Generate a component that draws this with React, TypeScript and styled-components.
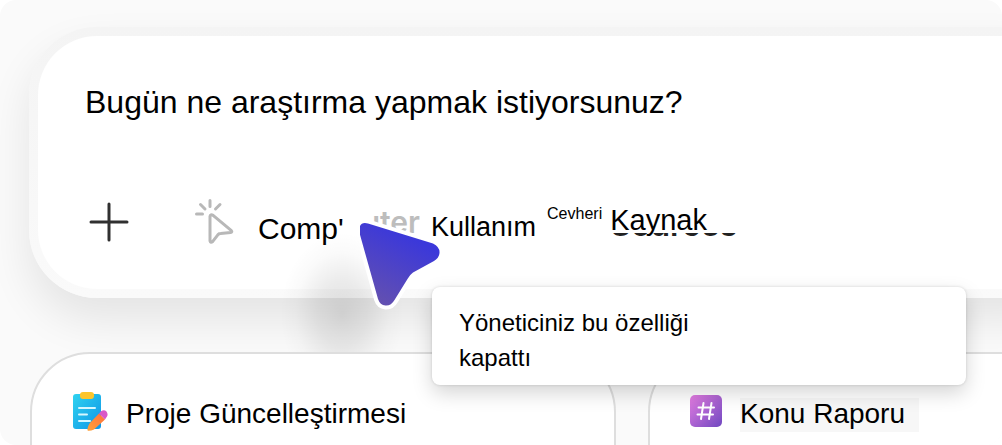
import React from 'react';
import styled, { createGlobalStyle } from 'styled-components';

const GlobalStyle = createGlobalStyle`
  * { box-sizing: border-box; }
  html, body { margin: 0; background: #fff; }
  body, button, textarea, input { font-family: 'Liberation Sans', Arial, sans-serif; color: #000; }
`;

const Page = styled.main`
  position: relative;
  height: 100vh;
  overflow: hidden;
  padding: 27px 0 0 29px;
  border-radius: 16px;
  background: #fafafa;
`;

const PromptCard = styled.section`
  display: flex;
  flex-direction: column;
  gap: 77px;
  margin-right: -80px;
  padding: 46px 48px 44px 47px;
  border: 9px solid transparent;
  border-radius: 68px;
  background:
    linear-gradient(#fff, #fff) padding-box,
    linear-gradient(#f4f4f4, #fafafa) border-box;
  box-shadow: 0 22px 44px rgba(0, 0, 0, 0.09);
`;

const PromptInput = styled.input`
  width: 100%;
  height: 40px;
  padding: 0;
  border: 0;
  outline: 0;
  background: transparent;
  font-size: 32px;
  &::placeholder { color: #000; opacity: 1; }
`;

const Toolbar = styled.div`
  display: flex;
  align-items: center;
  height: 46px;
`;

const ToolButton = styled.button`
  display: flex;
  align-items: center;
  padding: 0;
  border: 0;
  background: none;
  white-space: nowrap;
`;

const AddButton = styled(ToolButton)`
  margin: 0 61px 0 4px;
`;

const ComputerButton = styled(ToolButton)`
  gap: 20px;
  width: 241px;
`;

const Label = styled.span<{ $size: number; $drop?: number; $lift?: number }>`
  font-size: ${p => p.$size}px;
  line-height: 32px;
  padding-top: ${p => p.$drop ?? 0}px;
  padding-bottom: ${p => p.$lift ?? 0}px;
`;

const SourceGroup = styled(ToolButton)`
  gap: 8px;
  margin-left: 11px;
`;

const SourceLabel = styled(Label)`
  position: relative;
`;

const SourceRemnant = styled.span`
  position: absolute;
  left: 0;
  top: 29px;
  height: 5px;
  overflow: hidden;
  display: flex;
  align-items: flex-end;
  font: 600 32px/26px Inter, sans-serif;
  color: #222;
`;

const LabelRemnant = styled.span`
  position: absolute;
  left: 370px;
  top: 211px;
  width: 50px;
  height: 24px;
  overflow: hidden;
  display: flex;
  justify-content: flex-end;
  font: 600 30px/22px Inter, sans-serif;
  color: #bdbdbd;
`;

const CursorShade = styled.div`
  position: absolute;
  left: 280px;
  top: 232px;
  width: 124px;
  height: 164px;
  background: radial-gradient(closest-side, rgba(0, 0, 0, 0.12), rgba(0, 0, 0, 0.08) 40%, rgba(0, 0, 0, 0.02) 75%, rgba(0, 0, 0, 0));
`;

const Cursor = styled.svg`
  position: absolute;
  left: 360px;
  top: 216px;
`;

const Suggestions = styled.div`
  position: relative;
  display: grid;
  grid-template-columns: 1fr 1fr;
  gap: 32px;
  margin: 54px -232px 0 1px;
`;

const SuggestionCard = styled.button`
  display: flex;
  align-items: flex-start;
  gap: 18px;
  height: 160px;
  padding: 36px 40px;
  border: 2px solid #dedede;
  border-radius: 60px;
  background: #fff;
  text-align: left;
`;

const CardIcon = styled.span`
  display: flex;
  align-items: center;
  height: 42px;
`;

const CardLabel = styled.span<{ $shaded?: boolean }>`
  margin-top: 8px;
  padding: 0 14px 2px 0;
  font-size: 28px;
  line-height: 32px;
  background: ${p => (p.$shaded ? '#f7f7f7' : 'transparent')};
`;

const Tooltip = styled.div`
  position: absolute;
  left: 432px;
  right: 36px;
  top: 287px;
  padding: 18px 28px 10px 27px;
  border-radius: 8px;
  background: #fff;
  box-shadow: 0 8px 20px rgba(0, 0, 0, 0.17), 0 0 3px rgba(0, 0, 0, 0.15);
  font-size: 24px;
  line-height: 35px;
`;

const TooltipText = styled.p`
  max-width: 260px;
  margin: 0;
`;

const PlusIcon = () => (
  <svg width="40" height="40" viewBox="0 0 40 40" fill="none" stroke="#303030" strokeWidth="3" strokeLinecap="round" aria-hidden="true">
    <path d="M20 2v36M2 20h36" />
  </svg>
);

const ClickIcon = () => (
  <svg width="48" height="50" viewBox="190 198 48 50" fill="none" stroke="#b8b8b8" strokeWidth="3" strokeLinecap="round" strokeLinejoin="round" aria-hidden="true">
    <path d="M210 201.500v6M200.500 205.500l4.500 4.500M220 205.500l-4.500 4.500M196.500 215h6" />
    <path d="M210 217.500v24.500q.6 2.400 2.600.6l5.400-7q1-1 2.600-1l10-1q2.200-.6.500-2.200l-18-15q-2.800-1.700-3.100 1.100Z" />
  </svg>
);

const ClipboardIcon = () => (
  <svg width="36" height="40" viewBox="0 0 36 40" aria-hidden="true">
    <defs>
      <linearGradient id="board" x1="0" y1="0" x2="1" y2="1">
        <stop offset="0" stopColor="#2fd3f0" />
        <stop offset="1" stopColor="#0f95e6" />
      </linearGradient>
      <linearGradient id="pencil" x1="1" y1="0" x2="0" y2="1">
        <stop offset="0" stopColor="#ff6f3d" />
        <stop offset="1" stopColor="#ffa338" />
      </linearGradient>
    </defs>
    <rect x="1" y="3" width="28" height="35" rx="3" fill="url(#board)" />
    <rect x="8" y="1" width="14" height="7" rx="3" fill="#fcc52c" />
    <path d="M7 17h16M7 23.500h8M7 30h11" stroke="#d6f7ff" strokeWidth="2" strokeLinecap="round" />
    <path d="M27 22.500l6 6L22 38.500q-3 1.500-6 1.300-1-.5-.3-3 .5-2.600 2-4.600Z" fill="url(#pencil)" />
    <path d="M27 22.500l2-2.200q3-2.300 5.300 0 2.300 3 .5 5.500l-1.800 2.700Z" fill="#d957c8" />
  </svg>
);

const HashIcon = () => (
  <svg width="32" height="32" viewBox="0 0 32 32" aria-hidden="true">
    <defs>
      <linearGradient id="tile" x1="0" y1="0" x2="1" y2="1">
        <stop offset="0" stopColor="#e57de2" />
        <stop offset="1" stopColor="#7048c0" />
      </linearGradient>
    </defs>
    <rect width="32" height="32" rx="5" fill="url(#tile)" />
    <path d="M13.500 8l-2.500 16M21.500 8L19 24M8.500 12.500h15.500M7.500 19.500H23" stroke="#fff" strokeWidth="2" strokeLinecap="round" />
  </svg>
);

export default function App() {
  return (
    <>
      <GlobalStyle />
      <Page>
        <PromptCard>
          <PromptInput aria-label="Araştırma" placeholder="Bugün ne araştırma yapmak istiyorsunuz?" />
          <Toolbar>
            <AddButton aria-label="Ekle"><PlusIcon /></AddButton>
            <ComputerButton>
              <ClickIcon />
              <Label $size={30} $drop={14}>Comp'</Label>
            </ComputerButton>
            <ToolButton><Label $size={27} $drop={10}>Kullanım</Label></ToolButton>
            <SourceGroup>
              <Label $size={16} $lift={16}>Cevheri</Label>
              <SourceLabel $size={29} $lift={4}>
                <SourceRemnant aria-hidden="true">Sources</SourceRemnant>
                Kaynak
              </SourceLabel>
            </SourceGroup>
          </Toolbar>
        </PromptCard>
        <LabelRemnant aria-hidden="true">uter</LabelRemnant>
        <CursorShade />
        <Suggestions>
          <SuggestionCard>
            <CardIcon><ClipboardIcon /></CardIcon>
            <CardLabel>Proje Güncelleştirmesi</CardLabel>
          </SuggestionCard>
          <SuggestionCard>
            <CardIcon><HashIcon /></CardIcon>
            <CardLabel $shaded>Konu Raporu</CardLabel>
          </SuggestionCard>
        </Suggestions>
        <Tooltip role="tooltip">
          <TooltipText>Yöneticiniz bu özelliği kapattı</TooltipText>
        </Tooltip>
        <Cursor width="84" height="98" viewBox="360 216 84 98" aria-hidden="true">
          <defs>
            <linearGradient id="cursor" x1="0.7" y1="0.2" x2="0.3" y2="1">
              <stop offset="0" stopColor="#3b38da" />
              <stop offset="1" stopColor="#6350b0" />
            </linearGradient>
          </defs>
          <path
            d="M368 223.500L433 243.500Q440 247 439.500 253Q439 258 434 261L413 272.500Q409.500 275 407.500 279L394.500 300Q391 306 385.500 305.500Q380 305 378 299L359.500 233Q358 221 368 223.500Z"
            fill="url(#cursor)"
            stroke="#fff"
            strokeWidth="8"
            strokeLinejoin="round"
            paintOrder="stroke"
          />
        </Cursor>
      </Page>
    </>
  );
}
